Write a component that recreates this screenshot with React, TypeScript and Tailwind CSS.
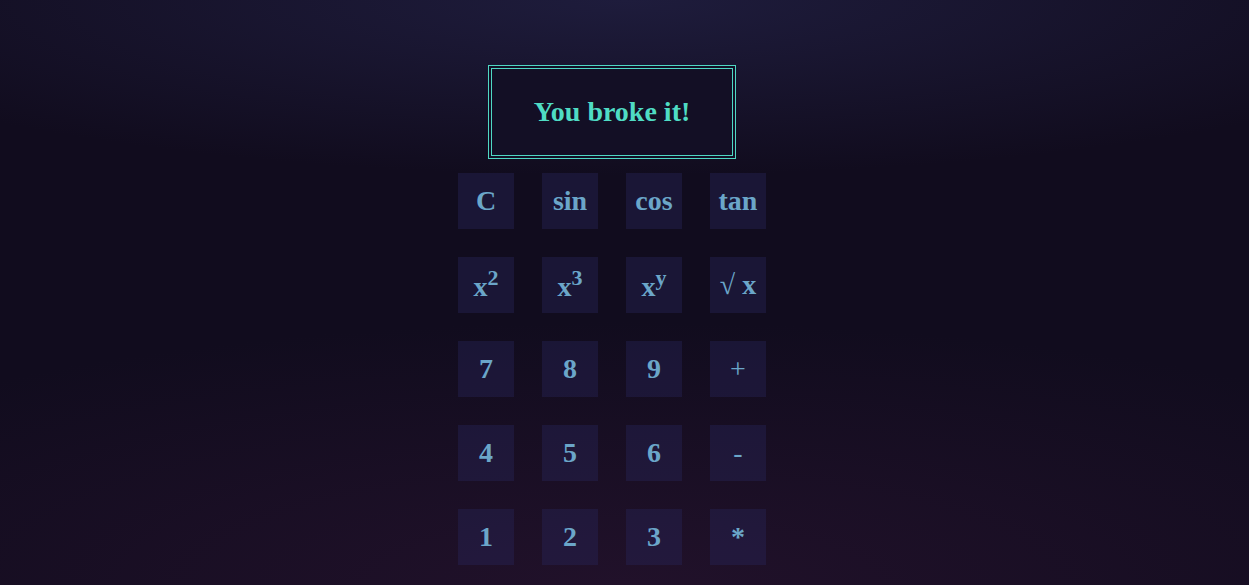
const keys: string[][] = [
  ['C', 'sin', 'cos', 'tan'],
  ['x2', 'x3', 'xy', 'sqrt'],
  ['7', '8', '9', '+'],
  ['4', '5', '6', '-'],
  ['1', '2', '3', '*'],
]

const Label = ({ k }: { k: string }) => {
  if (k === 'x2' || k === 'x3' || k === 'xy') {
    return (
      <span className="relative top-[2px]">
        x<span className="text-[22px] relative -top-[11px]">{k[1]}</span>
      </span>
    )
  }
  if (k === 'sqrt') return <span>√ x</span>
  if (k === '+' || k === '-') return <span className="font-normal">{k}</span>
  return <span>{k}</span>
}

export default function App() {
  return (
    <div
      className="min-h-[585px] w-full bg-[#110c1e] font-['Liberation_Serif',serif]"
      style={{
        backgroundImage:
          'radial-gradient(ellipse 70% 30% at 50% 0%, #1e1c3c 0%, rgba(30,28,60,0) 100%), radial-gradient(ellipse 80% 45% at 50% 100%, #21112a 0%, rgba(33,17,42,0) 100%)',
      }}
    >
      <div className="flex flex-col items-center pt-[65px] pr-[25px]">
        <div className="w-[248px] h-[94px] border-4 border-double border-[#4fd8c4] bg-[#130f25] flex items-center justify-center">
          <span className="text-[28px] font-bold text-[#4fdcc4]">You broke it!</span>
        </div>
        <div className="mt-[14px] grid grid-cols-4 gap-[28px]">
          {keys.flat().map((k) => (
            <div
              key={k}
              className="w-14 h-14 bg-[#28265a]/40 flex items-center justify-center text-[28px] font-bold text-[#6ba6c9] leading-none"
            >
              <Label k={k} />
            </div>
          ))}
        </div>
      </div>
    </div>
  )
}
